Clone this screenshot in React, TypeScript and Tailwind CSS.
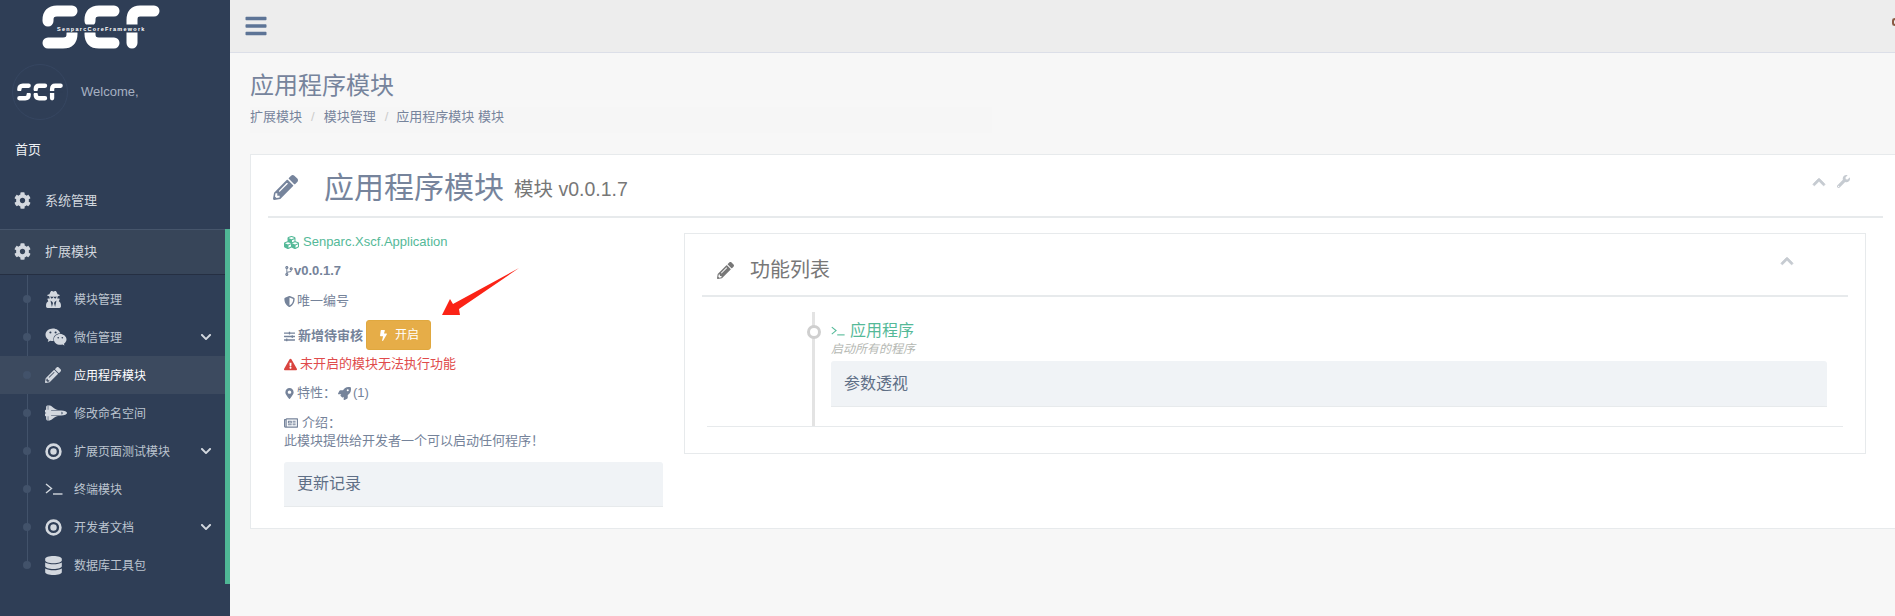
import type { ReactNode } from 'react';
import {
  FaBars,
  FaBolt,
  FaChevronDown,
  FaChevronUp,
  FaCodeBranch,
  FaCog,
  FaCubes,
  FaDatabase,
  FaExclamationTriangle,
  FaMapMarkerAlt,
  FaPencilAlt,
  FaRegNewspaper,
  FaRocket,
  FaShieldAlt,
  FaSlidersH,
  FaSpaceShuttle,
  FaUserSecret,
  FaWeixin,
  FaWrench,
} from 'react-icons/fa';

const ScfLogo = ({ className = '', showText = true }: { className?: string; showText?: boolean }) => (
  <svg viewBox="0 0 118 44" className={className} fill="none" stroke="#fff" strokeLinecap="round">
    {/* S */}
    <path d="M30 6 H15 Q6 6 6 15 V16" strokeWidth="11" />
    <path d="M6 38 H21 Q30 38 30 29 V28" strokeWidth="11" />
    {/* C */}
    <path d="M72 6 H57 Q48 6 48 15 V16" strokeWidth="11" />
    <path d="M48 28 V29 Q48 38 57 38 H72" strokeWidth="11" />
    {/* F */}
    <path d="M112 6 H98 Q90 6 90 15 V38" strokeWidth="11" />
    {showText && (
      <>
        <rect x="12" y="19.5" width="95" height="8" fill="#2f3e56" stroke="none" />
        <text x="15" y="26" fill="#fff" stroke="none" fontSize="5.5" fontWeight="700" letterSpacing="1.25">
          SenparcCoreFramework
        </text>
      </>
    )}
    {!showText && <rect x="0" y="19.5" width="118" height="5" fill="#2f3e56" stroke="none" />}
  </svg>
);

// fa4 dot-circle-o, the fa5 one has a much thinner ring
const DotCircle = () => (
  <svg viewBox="0 0 17 17" className="size-[17px]">
    <circle cx="8.5" cy="8.5" r="6.9" fill="none" stroke="currentColor" strokeWidth="2.6" />
    <circle cx="8.5" cy="8.5" r="3.2" fill="currentColor" />
  </svg>
);

const TerminalIcon = ({ className = '' }: { className?: string }) => (
  <svg viewBox="0 0 18 12" className={className} fill="none" stroke="currentColor" strokeWidth="1.4">
    <path d="M1 1 L6.5 5.5 L1 10" />
    <path d="M8 11 H17.5" />
  </svg>
);

const subMenu: { label: string; icon: ReactNode; arrow?: boolean; active?: boolean }[] = [
  { label: '模块管理', icon: <FaUserSecret className="size-[17px]" /> },
  { label: '微信管理', icon: <FaWeixin className="size-[22px]" />, arrow: true },
  { label: '应用程序模块', icon: <FaPencilAlt className="size-[16px]" />, active: true },
  { label: '修改命名空间', icon: <FaSpaceShuttle className="size-[22px]" /> },
  { label: '扩展页面测试模块', icon: <DotCircle />, arrow: true },
  { label: '终端模块', icon: <TerminalIcon className="h-[12px] w-[18px]" /> },
  { label: '开发者文档', icon: <DotCircle />, arrow: true },
  { label: '数据库工具包', icon: <FaDatabase className="h-[19px] w-[17px]" /> },
];

const Sidebar = () => (
  <aside className="w-[230px] shrink-0 bg-[#2f3e56] text-[#d3d8df]">
    <div className="h-[57px] pl-[42px] pt-[5px]">
      <ScfLogo className="h-[44px] w-[118px]" />
    </div>

    {/* avatar + welcome */}
    <div className="flex h-[70px] items-center pl-[12px]">
      <div className="flex size-[56px] items-center justify-center rounded-full border border-[#364661]">
        <ScfLogo className="h-[18px] w-[46px]" showText={false} />
      </div>
      <span className="ml-[13px] text-[13px] text-[#a7b1c2]">Welcome,</span>
    </div>

    <div className="flex h-[46px] items-center pl-[15px] text-[13px] text-[#eef0f3]">首页</div>
    <div className="mt-[5px] flex h-[46px] items-center pl-[14px] text-[13px]">
      <FaCog className="mr-[14px] mb-[2px] size-[17px]" />
      系统管理
    </div>

    <div className="mt-[5px] border-r-[5px] border-[#4fb795]">
      <div className="flex h-[46px] items-center border-t border-b border-t-[#46556b] border-b-[#252f42] bg-[#374559] pl-[14px] text-[13px]">
        <FaCog className="mr-[14px] mb-[2px] size-[17px]" />
        扩展模块
      </div>
      <ul className="relative pt-[5px] text-[12px] text-[#bcc4cf]">
        <span className="absolute top-0 bottom-[19px] left-[27px] w-px bg-[#42526a]" />
        {subMenu.map((item) => (
          <li
            key={item.label}
            className={`relative flex h-[38px] items-center ${item.active ? 'bg-[#3c4a5f] text-white' : ''}`}
          >
            <span className="absolute left-[23px] size-[8px] rounded-full bg-[#42526a]" />
            <span className="ml-[45px] flex w-[29px] items-center text-[#d3d8df]">{item.icon}</span>
            <span className="pt-px">{item.label}</span>
            {item.arrow && <FaChevronDown className="absolute left-[200px] size-[12px] text-[#d3d8df]" />}
          </li>
        ))}
      </ul>
    </div>
  </aside>
);

const InfoLine = ({ children, className = '' }: { children: ReactNode; className?: string }) => (
  <div className={`flex h-[20px] items-center text-[13px] ${className}`}>{children}</div>
);

const ModuleInfo = () => (
  <div className="w-[379px] shrink-0 text-[#75839a]">
    <InfoLine className="text-[12px] text-[#54b998]">
      <FaCubes className="mr-[4px] size-[15px]" />
      Senparc.Xscf.Application
    </InfoLine>
    <InfoLine className="mt-[9px] font-bold text-[12px]">
      <FaCodeBranch className="size-[10px]" />
      v0.0.1.7
    </InfoLine>
    <InfoLine className="mt-[10px]">
      <FaShieldAlt className="mr-[2px] size-[11px]" />
      唯一编号
    </InfoLine>
    <div className="mt-[9px] flex h-[30px] items-start">
      <div className="mt-[6px] flex h-[20px] items-center text-[13px] font-bold">
        <FaSlidersH className="mr-[3px] size-[11px]" />
        新增待审核
      </div>
      <button className="ml-[3px] flex h-[30px] w-[65px] items-center justify-center rounded-[3px] border border-[#e0a83f] bg-[#e6ad48] text-[12px] text-white">
        <FaBolt className="mr-[6px] size-[11px]" />
        开启
      </button>
    </div>
    <InfoLine className="mt-[4px] text-[#e04b4b]">
      <FaExclamationTriangle className="mr-[3px] size-[13px] text-[#d9443f]" />
      未开启的模块无法执行功能
    </InfoLine>
    <InfoLine className="mt-[9px]">
      <FaMapMarkerAlt className="mr-[2px] size-[11px]" />
      特性：
      <FaRocket className="mr-[2px] ml-[2px] size-[13px]" />
      (1)
    </InfoLine>
    <InfoLine className="mt-[10px]">
      <FaRegNewspaper className="mr-[4px] size-[14px]" />
      介绍：
    </InfoLine>
    <InfoLine className="-mt-[2px]">此模块提供给开发者一个可以启动任何程序！</InfoLine>
    <div className="mt-[11px] flex h-[45px] items-center rounded-t-[3px] border-b border-[#e7eaec] bg-[#f0f3f6] pl-[13px] text-[16px] text-[#5f6f86]">
      更新记录
    </div>
  </div>
);

const FeaturePanel = () => (
  <div className="mt-px ml-[21px] h-[221px] w-[1182px] shrink-0 border border-[#e7eaec] px-[17px]">
    <div className="flex h-[63px] items-center justify-between border-b-2 border-[#e7eaec] pt-[11px] text-[#777]">
      <div className="flex items-center text-[20px]">
        <FaPencilAlt className="mr-[16px] ml-[15px] size-[17px]" />
        功能列表
      </div>
      <FaChevronUp className="mr-[54px] mb-[19px] size-[14px] stroke-[30] text-[#c6cbd1]" />
    </div>
    <div className="relative mr-[5px] ml-[5px] h-[130px] border-b border-[#e7eaec] pt-[24px] pl-[124px]">
      <span className="absolute top-[15px] bottom-0 left-[105px] w-[3px] bg-[#e3e3e3]" />
      <span className="absolute top-[28px] left-[100px] size-[14px] rounded-full border-[3px] border-[#cfcfcf] bg-white" />
      <div className="flex h-[20px] items-center text-[16px] text-[#54b998]">
        <TerminalIcon className="mr-[5px] h-[10px] w-[14px]" />
        应用程序
      </div>
      <div className="text-[12px] leading-[16px] text-[#b5b8b3] italic">启动所有的程序</div>
      <div className="mt-[4px] mr-[16px] flex h-[46px] items-center rounded-t-[3px] border-b border-[#e7eaec] bg-[#f0f3f6] pl-[13px] text-[16px] text-[#5f6f86]">
        参数透视
      </div>
    </div>
  </div>
);

export default function App() {
  return (
    <div className="flex h-[616px] w-[1895px] overflow-hidden bg-[#f7f7f7] [font-family:'Liberation_Sans','Noto_Sans_CJK_SC',sans-serif]">
      <Sidebar />
      <main className="relative min-w-0 flex-1">
        <header className="flex h-[53px] items-center justify-between border-b border-[#dcdfe8] bg-[#ededed] pl-[14px]">
          <FaBars className="size-[24px] text-[#5d7496]" />
          <div className="mb-[8px] h-[8px] w-[3px] rounded-l-full border-2 border-r-0 border-[#8a5a44]" />
        </header>

        <div className="pt-[16px] pl-[20px]">
          <h2 className="text-[24px] leading-[34px] text-[#76849c]">应用程序模块</h2>
          <nav className="mt-[4px] flex h-[26px] w-[742px] items-start bg-[#f6f6f6] text-[13px] leading-[20px] text-[#76849c]">
            <span>扩展模块</span>
            <span className="mx-[9px] text-[#ccc]">/</span>
            <span>模块管理</span>
            <span className="mr-[8px] ml-[9px] text-[#ccc]">/</span>
            <span>应用程序模块 模块</span>
          </nav>

          {/* module card */}
          <section className="mt-[21px] h-[375px] border-y border-l border-[#e7eaec] bg-white pl-[17px]">
            <div className="mr-[12px] flex h-[63px] items-center justify-between border-b-2 border-[#e7eaec]">
              <div className="flex items-center pt-[4px] text-[#76849c]">
                <FaPencilAlt className="mr-[26px] ml-[5px] size-[25px]" />
                <span className="text-[30px]">应用程序模块</span>
                <span className="mt-[4px] ml-[10px] text-[19.5px] text-[#777]">模块 v0.0.1.7</span>
              </div>
              <div className="mr-[33px] mb-[8px] flex items-center gap-[11px] text-[#c6cbd1]">
                <FaChevronUp className="size-[14px] stroke-[30]" />
                <FaWrench className="size-[13px]" />
              </div>
            </div>
            <div className="mt-[14px] flex pl-[16px]">
              <ModuleInfo />
              <FeaturePanel />
            </div>
          </section>
        </div>

        {/* annotation arrow drawn over the screenshot */}
        <svg className="absolute top-[268px] left-[212px] h-[48px] w-[78px]" viewBox="0 0 78 48">
          <path d="M0 47 L8 31 L11 36 L77 0 L17 41 L18 47 Z" fill="#fb2316" />
        </svg>
      </main>
    </div>
  );
}
